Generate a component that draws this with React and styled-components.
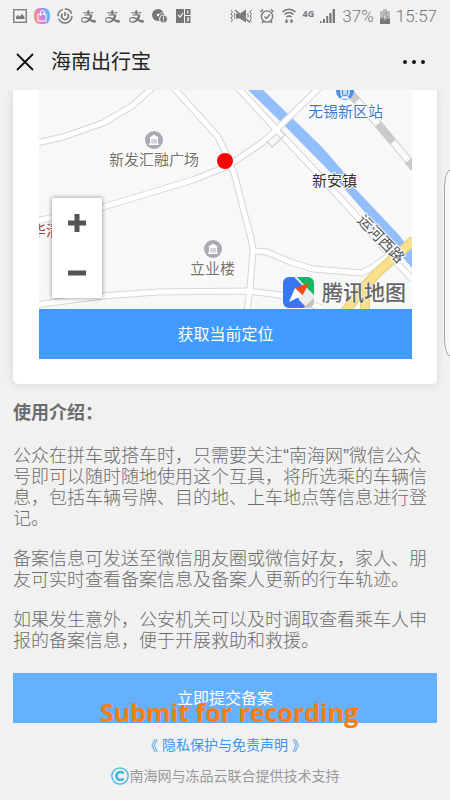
import React from 'react';
import styled, { createGlobalStyle } from 'styled-components';
import { AiOutlineAlipay } from 'react-icons/ai';

const GlobalStyle = createGlobalStyle`
  * {
    box-sizing: border-box;
  }

  body {
    margin: 0;
    background: #f1f1f1;
    font-family: "Liberation Sans", "Noto Sans CJK SC", sans-serif;
  }

  button {
    border: none;
    padding: 0;
    font-family: inherit;
    cursor: pointer;
  }
`;

const paragraphs = [
  '公众在拼车或搭车时，只需要关注“南海网”微信公众号即可以随时随地使用这个互具，将所选乘的车辆信息，包括车辆号牌、目的地、上车地点等信息进行登记。',
  '备案信息可发送至微信朋友圈或微信好友，家人、朋友可实时查看备案信息及备案人更新的行车轨迹。',
  '如果发生意外，公安机关可以及时调取查看乘车人申报的备案信息，便于开展救助和救援。',
];

const StatusIcons = () => (
  <StatusGroup>
    <svg width="14" height="14" viewBox="0 0 14 14">
      <rect x="0.7" y="0.7" width="12.6" height="12.6" fill="none" stroke="#777" strokeWidth="1.3" />
      <path d="M3 10V8l2-2 1.5 1.5L9 5l2.500 3v2z" fill="#777" />
    </svg>
    <svg width="16" height="16" viewBox="0 0 16 16">
      <defs>
        <linearGradient id="shop" x1="0" y1="0.6" x2="1" y2="0.3">
          <stop offset="0" stopColor="#f2997f" />
          <stop offset="0.35" stopColor="#ee7fc4" />
          <stop offset="0.7" stopColor="#8f9df5" />
          <stop offset="1" stopColor="#5cc8f5" />
        </linearGradient>
      </defs>
      <rect width="16" height="16" rx="6" fill="url(#shop)" />
      <path d="M4 6h8v7H4zM6.500 8V5a2 2 0 0 1 4-1v3" fill="none" stroke="#fff" />
    </svg>
    <svg width="16" height="16" viewBox="0 0 16 16" fill="none" stroke="#777">
      <circle cx="8" cy="8" r="7" strokeWidth="1.5" strokeDasharray="19 2.500 9 2 9 2.500" />
      <path d="M5.500 5.800a3.400 3.400 0 1 0 5 0M8 4v4" strokeWidth="1.6" />
    </svg>
    <AiOutlineAlipay size={17} />
    <AiOutlineAlipay size={17} />
    <AiOutlineAlipay size={17} />
    <svg width="16" height="16" viewBox="0 0 16 16">
      <circle cx="6" cy="7" r="6" fill="#777" />
      <circle cx="6" cy="7" r="1.300" fill="#f1f1f1" />
      <path d="M7 6.500l5-3" stroke="#f1f1f1" strokeWidth="0.800" />
      <circle cx="11.500" cy="11" r="4" fill="#777" stroke="#f1f1f1" />
      <path d="M11.500 8.500v3M11.500 12.300v1.200" stroke="#f1f1f1" strokeWidth="1.200" />
    </svg>
    <svg width="16" height="16" viewBox="0 0 16 16">
      <path d="M1 1h8v14H1zM10 1h5.500v6H10zM10 8h5.500v7H10z" fill="#777" />
      <path d="M3 7l2 2 3-4M12.700 2.500v3M12 10h1.500v2H12.500v1.500" fill="none" stroke="#f1f1f1" strokeWidth="1.2" />
    </svg>
  </StatusGroup>
);

const StatusInfo = () => (
  <StatusGroup $tight>
    <svg width="23" height="16" viewBox="0 0 23 16" fill="none" stroke="#777">
      <path d="M6 5.500h4L16 1.500v13L10 10.500H6z" fill="#777" stroke="none" />
      <path d="M4 1l16 13.500" stroke="#f1f1f1" strokeWidth="1.2" />
      <path d="M5 2l15 12.500" strokeWidth="1.5" />
      <path d="M1 2l1.500 2L1 6l1.500 2L1 10l1.500 2L1 14M4 5l1 1.500L4 8l1 1.500L4 11M21.500 2L20 4l1.500 2L20 8l1.500 2L20 12l1.500 2M18.500 5l-1 1.500 1 1.500-1 1.500" />
    </svg>
    <svg width="16" height="16" viewBox="0 0 16 16" fill="none" stroke="#777" strokeWidth="1.4">
      <circle cx="8" cy="8.500" r="5.600" />
      <path d="M5.500 8.500l2 2L10.800 6.500M1.500 4L4 1.500M14.500 4L12 1.500M4.500 13L3 15M11.500 13l1.500 2" />
    </svg>
    <svg width="16" height="16" viewBox="0 0 16 16" fill="none" stroke="#777" strokeWidth="1.5">
      <path d="M1.500 4a9 9 0 0 1 13 0M3.500 6.500a6.200 6.200 0 0 1 9 0M5.500 9a3.500 3.500 0 0 1 5 0" />
      <path d="M5.500 11v3M10.500 12v3" />
      <path d="M3.500 13h4l-2 2.500zM8.500 13.500h4l-2-2.500z" fill="#777" stroke="none" />
    </svg>
    <Network>4G</Network>
    <svg width="16" height="16" viewBox="0 0 16 16" fill="#777">
      <path d="M0 13h1.500v2H0zM3 11h2v4H3zM6.200 8h2v7h-2zM9.300 5h2.200v10H9.300zM12.600 1H15v14h-2.400z" />
    </svg>
    <StatusText>37%</StatusText>
    <svg width="10" height="15" viewBox="0 0 10 15">
      <path d="M3 0h4v2h3v13H0V2h3z" fill="#bbb" />
      <path d="M0 9.500h10V15H0z" fill="#777" />
      <path d="M6.500 3L2.500 8.500h2L3.500 13l4-5.500h-2z" fill="#f1f1f1" stroke="#777" strokeWidth="0.600" />
    </svg>
    <StatusText>15:57</StatusText>
  </StatusGroup>
);

const Landmark = ({ x, y }) => (
  <g transform={`translate(${x} ${y})`}>
    <circle r="9" fill="#a8abb2" />
    <path d="M-5 -2L0 -5.500 5 -2zM-4 -2h8v5.500h-8zM-5 3.500H5V5H-5z" fill="#fff" />
    <path d="M-2 -1v4.500M0 -1v4.500M2 -1v4.500" stroke="#a8abb2" />
  </g>
);

const roads = [
  'M36 143L63 137 103 123 132 106 152 88',
  'M174 88L218 137 228 158',
  'M228 166L193 180 103 207 36 221',
  'M226 155L234 173 243 208 251 238 253 251 250 288 247 312',
  'M238 88L276 129 318 174 361 221 396 262 412 279',
  'M228 166L263 142 278 128 319 88',
  'M36 305L102 296 157 292 248 291 280 295 322 308',
  'M253 251L267 252 290 262 313 269 362 273 373 267 387 257 399 250',
];

const AreaMap = () => (
  <MapDrawing viewBox="39 90 373 219" role="img" aria-label="地图">
    <rect x="39" y="90" width="373" height="219" fill="#f8f8f8" />
    <path d="M248 90H263L287 113 322 147 342 170 349 182 399 235 405 243 412 250V268L390 243 363 210 330 172 283 124z" fill="#92befb" />
    {roads.map((d) => <path key={d} d={d} fill="none" stroke="#d6d6d8" strokeWidth="7" strokeLinejoin="round" />)}
    {roads.map((d) => <path key={d} d={d} fill="none" stroke="#fff" strokeWidth="5" strokeLinejoin="round" />)}
    <path d="M267 141l5 6 13-12-5-5" fill="none" stroke="#d6d6d8" strokeWidth="1.500" />
    <path d="M350 93L378 124 414 167" fill="none" stroke="#cfcfcf" strokeWidth="8" />
    <path d="M350 93L378 124 414 167" fill="none" stroke="#fafafa" strokeWidth="6" />
    <path d="M350 93l7 8M378 124l15 18M408 161l6 7" fill="none" stroke="#cacaca" strokeWidth="8" />
    <path d="M414 240L378 272 363 288 345 312M365 284V312" fill="none" stroke="#e6cb7c" strokeWidth="10" />
    <path d="M414 240L378 272 363 288 345 312M365 284V312" fill="none" stroke="#f8e08c" strokeWidth="8" />
    <Landmark x={154} y={140} />
    <Landmark x={213} y={249} />
    <circle cx="345" cy="91" r="9" fill="#4a8fe8" />
    <path d="M341 89v4a4 4 0 0 0 8 0v-4M344 90v5M346 90v5M341 98l8 0" fill="none" stroke="#fff" strokeWidth="1.300" />
    <Place x="109" y="165">新发汇融广场</Place>
    <Place x="190" y="274">立业楼</Place>
    <Place x="308" y="117" $color="#3f7ac6">无锡新区站</Place>
    <Place x="312" y="186" $color="#333">新安镇</Place>
    <Place x="31" y="236" $color="#a8433d">华清</Place>
    <Place x="-30" y="5" transform="translate(381 239) rotate(46)" $color="#555">运河西路</Place>
    <circle cx="225" cy="161" r="8" fill="#f00" />
  </MapDrawing>
);

const App = () => {
  return (
    <Page>
      <GlobalStyle />
      <StatusBar>
        <StatusIcons />
        <StatusInfo />
      </StatusBar>

      <TitleBar>
        <IconButton aria-label="关闭">
          <svg width="18" height="18" viewBox="0 0 18 18">
            <path d="M1 1l16 16M17 1L1 17" stroke="#111" strokeWidth="1.800" />
          </svg>
        </IconButton>
        <Title>海南出行宝</Title>
        <IconButton aria-label="更多">
          <svg width="22" height="6" viewBox="0 0 22 6" fill="#111">
            <circle cx="2" cy="3" r="2" />
            <circle cx="11" cy="3" r="2" />
            <circle cx="20" cy="3" r="2" />
          </svg>
        </IconButton>
      </TitleBar>

      <Content>
        <Card>
          <MapBox>
            <AreaMap />
            <ZoomControl>
              <ZoomButton aria-label="放大">
                <svg width="18" height="18" viewBox="0 0 18 18">
                  <path d="M9 0v18M0 9h18" stroke="#555" strokeWidth="5" />
                </svg>
              </ZoomButton>
              <ZoomButton aria-label="缩小">
                <svg width="18" height="18" viewBox="0 0 18 18">
                  <path d="M0 9h18" stroke="#555" strokeWidth="5" />
                </svg>
              </ZoomButton>
            </ZoomControl>
            <MapBrand>
              <svg width="31" height="31" viewBox="0 0 31 31">
                <defs>
                  <clipPath id="brand"><rect width="31" height="31" rx="6" /></clipPath>
                </defs>
                <g clipPath="url(#brand)">
                  <rect width="31" height="31" fill="#ececec" />
                  <path d="M0 0H11L19 8 15 21 24 31H0z" fill="#3577f5" />
                  <path d="M14 0H31V18L23 10z" fill="#12b862" />
                  <path d="M31 21V31H20z" fill="#c2c2c4" />
                  <path d="M24 13l7 7-9 9-6-6z" fill="#ececec" />
                </g>
                <path d="M26 6L12 11 19.500 18.500z" fill="#fa4a14" />
                <path d="M12 11L6 25 19.500 18.500z" fill="#fff" />
              </svg>
              腾讯地图
            </MapBrand>
          </MapBox>
          <ActionButton>获取当前定位</ActionButton>
        </Card>

        <IntroTitle>使用介绍：</IntroTitle>
        {paragraphs.map((text) => <Paragraph key={text}>{text}</Paragraph>)}

        <SubmitArea>
          <ActionButton $light>立即提交备案</ActionButton>
          <Caption>Submit for recording</Caption>
        </SubmitArea>

        <PolicyLink href="#privacy">《 隐私保护与免责声明 》</PolicyLink>

        <Footer>
          <svg width="18" height="18" viewBox="0 0 18 18" fill="none" stroke="#3fb9dc">
            <circle cx="9" cy="9" r="8.200" strokeWidth="1.300" />
            <path d="M12.500 6.500A4 4 0 1 0 12.500 11.500" strokeWidth="2.600" />
          </svg>
          南海网与冻品云联合提供技术支持
        </Footer>
      </Content>

      <EdgeHandle />
    </Page>
  );
};

const Page = styled.div`
  position: relative;
  min-height: 100vh;
  overflow: hidden;
  color: #6c6c6c;
`;

const StatusBar = styled.div`
  display: flex;
  justify-content: space-between;
  align-items: center;
  height: 32px;
  padding: 0 13px;
  color: #777;
`;

const StatusGroup = styled.div`
  display: flex;
  align-items: center;
  gap: ${(props) => (props.$tight ? '6px' : '7px')};
`;

const Network = styled.span`
  align-self: flex-start;
  font: 700 9px "Open Sans", sans-serif;
`;

const StatusText = styled.span`
  font: 300 17px/18px Roboto, sans-serif;
`;

const TitleBar = styled.header`
  display: flex;
  align-items: center;
  gap: 17px;
  height: 58px;
  padding: 2px 25px 0 16px;
`;

const IconButton = styled.button`
  display: flex;
  background: none;
`;

const Title = styled.h1`
  flex: 1;
  margin: 0;
  font-size: 20px;
  font-weight: 400;
  line-height: 24px;
  color: #222;
`;

const Content = styled.main`
  display: flex;
  flex-direction: column;
  padding: 0 13px 14px;
`;

const Card = styled.section`
  padding: 0 25px 25px 26px;
  background: #fff;
  border-radius: 0 0 5px 5px;
  box-shadow: 0 0 10px rgba(0, 0, 0, 0.12);
  clip-path: inset(0 -13px -13px);
`;

const MapBox = styled.div`
  position: relative;
`;

const MapDrawing = styled.svg`
  display: block;
  width: 100%;
  height: auto;
`;

const Place = styled.text`
  font-size: 15px;
  fill: ${(props) => props.$color || '#777369'};
  stroke: #fff;
  stroke-width: 2px;
  paint-order: stroke;
`;

const ZoomControl = styled.div`
  position: absolute;
  left: 13px;
  bottom: 11px;
  background: #fff;
  border-radius: 2px;
  box-shadow: 0 0 5px rgba(0, 0, 0, 0.45);
`;

const ZoomButton = styled.button`
  display: flex;
  justify-content: center;
  align-items: center;
  width: 50px;
  height: 50px;
  background: none;
`;

const MapBrand = styled.div`
  position: absolute;
  right: 6px;
  bottom: 1px;
  display: flex;
  align-items: center;
  gap: 8px;
  font-size: 21px;
  font-weight: 500;
  line-height: 30px;
  color: #666;
  text-shadow: 0 0 2px #fff, 0 0 2px #fff;
`;

const ActionButton = styled.button`
  display: block;
  width: 100%;
  height: 50px;
  padding-bottom: 3px;
  background: ${(props) => (props.$light ? '#65b0ff' : '#409aff')};
  color: #fff;
  font-size: 16px;
`;

const IntroTitle = styled.h2`
  margin: 19px 0 22px;
  font-size: 18px;
  font-weight: 700;
  line-height: 21px;
`;

const Paragraph = styled.p`
  margin: 0 0 19px;
  font-size: 18px;
  font-weight: 300;
  line-height: 21px;
`;

const SubmitArea = styled.div`
  position: relative;
  margin-top: 2px;
`;

const Caption = styled.span`
  position: absolute;
  left: 87px;
  bottom: -5px;
  font: 700 25px/32px "Open Sans", sans-serif;
  color: #ff7d0a;
  white-space: nowrap;
  pointer-events: none;
`;

const PolicyLink = styled.a`
  align-self: center;
  margin-top: 12px;
  font-size: 14px;
  line-height: 20px;
  color: #3d95ee;
  text-decoration: none;
`;

const Footer = styled.footer`
  display: flex;
  justify-content: center;
  align-items: center;
  gap: 1px;
  margin-top: 11px;
  font-size: 14px;
  line-height: 20px;
  color: #999;
`;

const EdgeHandle = styled.div`
  position: absolute;
  top: 170px;
  right: 0;
  width: 6px;
  height: 186px;
  border: 1px solid #a5a5a5;
  border-right: none;
  border-radius: 6px 0 0 6px / 18px 0 0 18px;
  background: #f8f8f8;
`;

export default App;
